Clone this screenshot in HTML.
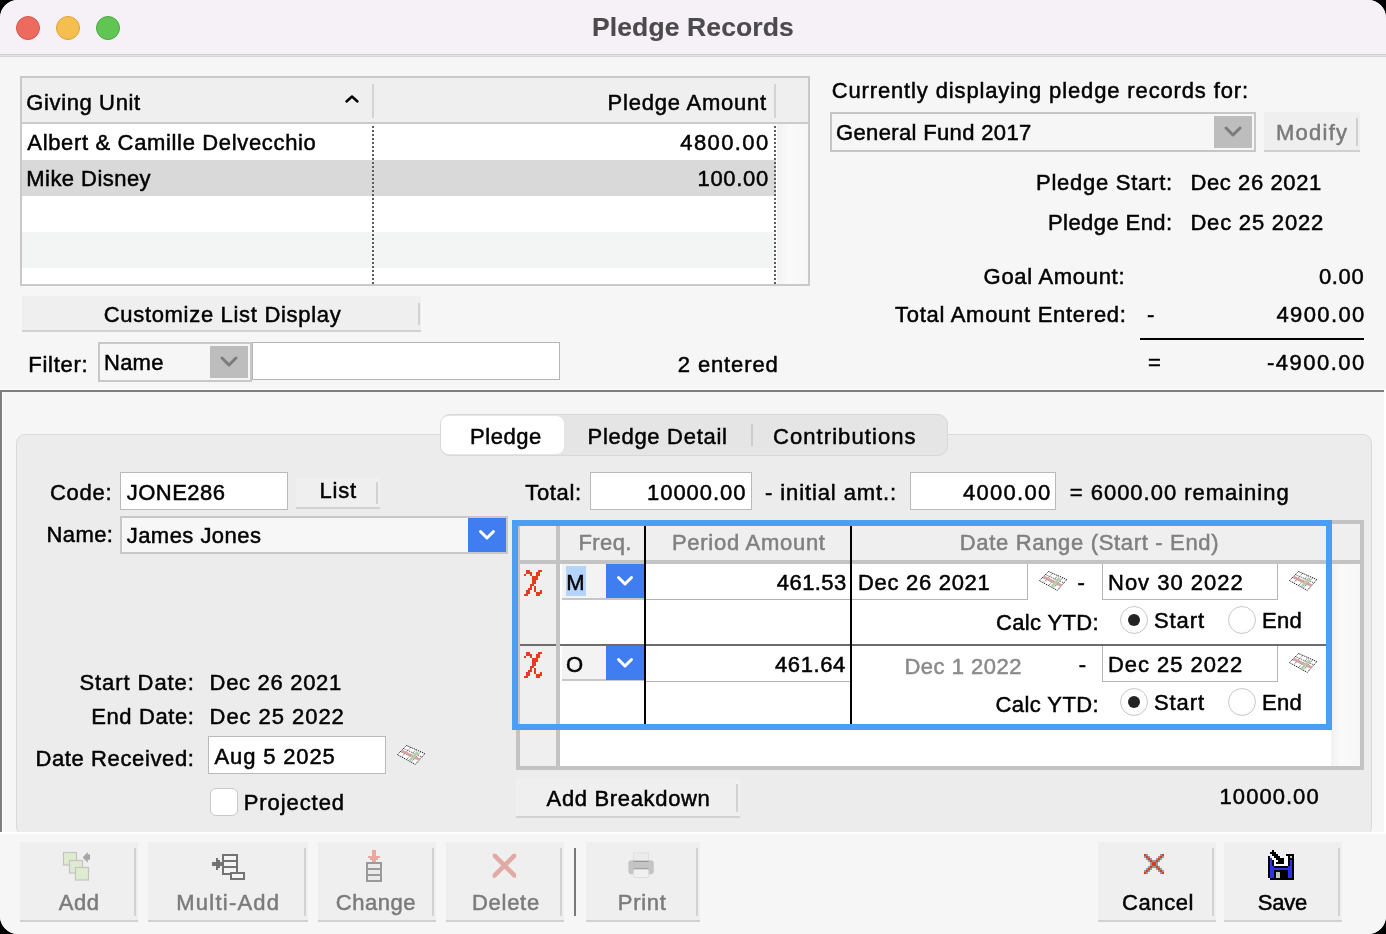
<!DOCTYPE html>
<html><head><meta charset="utf-8"><title>Pledge Records</title>
<style>
html,body{margin:0;padding:0;width:1386px;height:934px;overflow:hidden;background:#000}
#w{position:absolute;left:0;top:0;width:1386px;height:934px;background:#f6f6f6;border-radius:18px;overflow:hidden;font-family:"Liberation Sans",sans-serif}
.t{position:absolute;white-space:pre;font-family:"Liberation Sans",sans-serif;color:#000;-webkit-text-stroke:0.5px currentColor}
.b{position:absolute;box-sizing:border-box}
svg{position:absolute;overflow:visible}
</style></head><body><div id="w">
<!-- title bar -->
<div class=b style="left:0;top:0;width:1386px;height:54px;background:#f6f1f6"></div>
<div class=b style="left:0;top:54px;width:1386px;height:1px;background:#d2cdd2"></div>
<div class=b style="left:0;top:55px;width:1386px;height:1px;background:#e6e2e6"></div>
<div class=b style="left:0;top:56px;width:1386px;height:1px;background:#d4d4d4"></div>
<div class=b style="left:16px;top:16px;width:24px;height:24px;border-radius:50%;background:#ec6a5e;border:1px solid #d5564b"></div>
<div class=b style="left:56px;top:16px;width:24px;height:24px;border-radius:50%;background:#f4bf4f;border:1px solid #d9a33a"></div>
<div class=b style="left:96px;top:16px;width:24px;height:24px;border-radius:50%;background:#61c554;border:1px solid #4ea83f"></div>

<!-- table -->
<div class=b style="left:20px;top:76px;width:790px;height:210px;border:2px solid #c9c9c9;background:#fff"></div>
<div class=b style="left:22px;top:78px;width:786px;height:44px;background:#efefef"></div>
<div class=b style="left:22px;top:122px;width:786px;height:2px;background:#cbcbcb"></div>
<div class=b style="left:22px;top:160px;width:754px;height:36px;background:#d9d9d9"></div>
<div class=b style="left:22px;top:232px;width:754px;height:36px;background:#f3f4f4"></div>
<div class=b style="left:372px;top:84px;width:2px;height:34px;background:#d4d4d4"></div>
<div class=b style="left:774px;top:84px;width:2px;height:34px;background:#d4d4d4"></div>
<div class=b style="left:372px;top:126px;width:2px;height:158px;background:repeating-linear-gradient(180deg,#5c5c5c 0 2px,transparent 2px 4px)"></div>
<div class=b style="left:774px;top:126px;width:2px;height:158px;background:repeating-linear-gradient(180deg,#5c5c5c 0 2px,transparent 2px 4px)"></div>
<div class=b style="left:777px;top:124px;width:31px;height:160px;background:linear-gradient(90deg,#f2f2f2,#fafafa 40%,#f7f7f7)"></div>
<svg style="left:340px;top:90px" width="26" height="20"><path d="M6.5 11.5 L12 6.5 L17.5 11.5" fill="none" stroke="#000" stroke-width="2.4" stroke-linecap="round" stroke-linejoin="round"/></svg>

<!-- right info -->
<div class=b style="left:830px;top:112px;width:426px;height:40px;border:2px solid #c6c6c6;background:#f6f6f6"></div>
<div class=b style="left:1214px;top:116px;width:38px;height:32px;background:#bdbdbd"></div>
<svg style="left:1214px;top:116px" width="38" height="32"><path d="M12 12 L19 19 L26 12" fill="none" stroke="#7b7b7b" stroke-width="3" stroke-linecap="round" stroke-linejoin="round"/></svg>
<div class=b style="left:1264px;top:112px;width:96px;height:40px;background:#efefef;border-bottom:2px solid #d0d0d0"></div>
<div class=b style="left:1356px;top:118px;width:2px;height:28px;background:#d0d0d0"></div>
<div class=b style="left:1140px;top:338px;width:224px;height:2px;background:#000"></div>

<!-- customize / filter -->
<div class=b style="left:22px;top:296px;width:399px;height:36px;background:#efefef;border-bottom:2px solid #d2d2d2"></div>
<div class=b style="left:418px;top:303px;width:2px;height:22px;background:#d2d2d2"></div>
<div class=b style="left:98px;top:342px;width:154px;height:40px;border:2px solid #c8c8c8;background:#f6f6f6"></div>
<div class=b style="left:210px;top:346px;width:38px;height:32px;background:#bdbdbd"></div>
<svg style="left:210px;top:346px" width="38" height="32"><path d="M12 12 L19 19 L26 12" fill="none" stroke="#7b7b7b" stroke-width="3" stroke-linecap="round" stroke-linejoin="round"/></svg>
<div class=b style="left:252px;top:342px;width:308px;height:38px;border:1px solid #b5b5b5;background:#fff"></div>

<!-- separator -->
<div class=b style="left:0;top:389px;width:1384px;height:1px;background:#fff"></div>
<div class=b style="left:0;top:390px;width:1384px;height:2px;background:#7f7f7f"></div>
<div class=b style="left:0;top:390px;width:2px;height:442px;background:#7f7f7f"></div>
<div class=b style="left:2px;top:392px;width:1px;height:440px;background:#fff"></div>
<div class=b style="left:1384px;top:389px;width:2px;height:443px;background:#fff"></div>

<!-- tab panel -->
<div class=b style="left:16px;top:434px;width:1356px;height:402px;border:1px solid #d9d9d9;border-radius:9px;background:#ececec"></div>
<div class=b style="left:440px;top:414px;width:508px;height:42px;border:1px solid #d8d8d8;border-radius:10px;background:#e5e5e5"></div>
<div class=b style="left:441px;top:416px;width:123px;height:38px;border-radius:8px;background:#fff"></div>
<div class=b style="left:751px;top:424px;width:2px;height:22px;background:#cbcbcb"></div>

<!-- white line above toolbar + toolbar bg -->
<div class=b style="left:0;top:832px;width:1386px;height:2px;background:#fff"></div>
<div class=b style="left:0;top:834px;width:1386px;height:100px;background:#f6f6f6"></div>

<!-- left form -->
<div class=b style="left:120px;top:472px;width:168px;height:38px;border:1px solid #b9b9b9;background:#fff"></div>
<div class=b style="left:296px;top:478px;width:84px;height:31px;background:#efefef;border-bottom:2px solid #d2d2d2"></div>
<div class=b style="left:376px;top:482px;width:2px;height:22px;background:#d2d2d2"></div>
<div class=b style="left:120px;top:516px;width:388px;height:38px;border:2px solid #c8c8c8;background:#f7f7f7"></div>
<div class=b style="left:468px;top:518px;width:38px;height:34px;background:#3f7df0"></div>
<svg style="left:468px;top:518px" width="38" height="34"><path d="M12.5 13.5 L19 20 L25.5 13.5" fill="none" stroke="#fff" stroke-width="3" stroke-linecap="round" stroke-linejoin="round"/></svg>
<div class=b style="left:208px;top:736px;width:178px;height:38px;border:1px solid #b9b9b9;background:#fff"></div>
<div class=b style="left:210px;top:788px;width:28px;height:28px;border:1px solid #c9c9c9;border-radius:6px;background:#fff"></div>

<!-- totals fields -->
<div class=b style="left:590px;top:472px;width:162px;height:38px;border:1px solid #b9b9b9;background:#fff"></div>
<div class=b style="left:910px;top:472px;width:146px;height:38px;border:1px solid #b9b9b9;background:#fff"></div>

<!-- grid -->
<div class=b style="left:516px;top:520px;width:848px;height:250px;border:4px solid #c3c3c3;background:#fff"></div>
<div class=b style="left:520px;top:524px;width:840px;height:36px;background:#efefef"></div>
<div class=b style="left:520px;top:560px;width:840px;height:4px;background:#c3c3c3"></div>
<div class=b style="left:520px;top:564px;width:36px;height:202px;background:#efefef"></div>
<div class=b style="left:556px;top:524px;width:4px;height:242px;background:#c3c3c3"></div>
<div class=b style="left:1331px;top:564px;width:29px;height:202px;background:linear-gradient(90deg,#f1f1f1,#fafafa 35%,#f7f7f7)"></div>
<!-- row separator -->
<div class=b style="left:520px;top:644px;width:36px;height:2px;background:#6c6c6c"></div>
<div class=b style="left:560px;top:644px;width:768px;height:2px;background:#6c6c6c"></div>
<!-- black dividers -->
<div class=b style="left:644px;top:525px;width:2px;height:199px;background:#000"></div>
<div class=b style="left:850px;top:525px;width:2px;height:199px;background:#000"></div>
<!-- row 1 -->
<div class=b style="left:562px;top:564px;width:82px;height:36px;background:#f3f3f3;border-bottom:2px solid #c6c6c6"></div>
<div class=b style="left:606px;top:564px;width:38px;height:34px;background:#3f7df0"></div>
<svg style="left:606px;top:564px" width="38" height="34"><path d="M12.5 13.5 L19 20 L25.5 13.5" fill="none" stroke="#fff" stroke-width="3" stroke-linecap="round" stroke-linejoin="round"/></svg>
<div class=b style="left:566px;top:566px;width:20px;height:30px;background:#b5d4fb"></div>
<div class=b style="left:646px;top:564px;width:204px;height:36px;border-bottom:1px solid #b0b0b0;background:#fff"></div>
<div class=b style="left:852px;top:564px;width:176px;height:36px;border-right:1px solid #b5b5b5;border-bottom:1px solid #b5b5b5;background:#fff"></div>
<div class=b style="left:1102px;top:564px;width:176px;height:36px;border:1px solid #b5b5b5;border-top:none;background:#fff"></div>
<!-- row 2 -->
<div class=b style="left:562px;top:646px;width:82px;height:35px;background:#f3f3f3;border-bottom:2px solid #c6c6c6"></div>
<div class=b style="left:606px;top:646px;width:38px;height:34px;background:#3f7df0"></div>
<svg style="left:606px;top:647px" width="38" height="34"><path d="M12.5 12.5 L19 19 L25.5 12.5" fill="none" stroke="#fff" stroke-width="3" stroke-linecap="round" stroke-linejoin="round"/></svg>
<div class=b style="left:646px;top:646px;width:204px;height:36px;border-bottom:1px solid #b0b0b0;background:#fff"></div>
<div class=b style="left:1102px;top:646px;width:176px;height:36px;border:1px solid #b5b5b5;border-top:none;background:#fff"></div>
<!-- focus ring -->
<div class=b style="left:512px;top:520px;width:820px;height:210px;border:6px solid #4a9ff5"></div>

<!-- add breakdown -->
<div class=b style="left:516px;top:778px;width:224px;height:40px;background:#efefef;border-bottom:2px solid #d2d2d2"></div>
<div class=b style="left:736px;top:784px;width:2px;height:28px;background:#d2d2d2"></div>

<!-- toolbar buttons -->
<div class=b style="left:20px;top:842px;width:118px;height:80px;background:#efefef;border-bottom:2px solid #d2d2d2"></div>
<div class=b style="left:134px;top:848px;width:2px;height:68px;background:#d2d2d2"></div>
<div class=b style="left:148px;top:842px;width:160px;height:80px;background:#efefef;border-bottom:2px solid #d2d2d2"></div>
<div class=b style="left:304px;top:848px;width:2px;height:68px;background:#d2d2d2"></div>
<div class=b style="left:318px;top:842px;width:118px;height:80px;background:#efefef;border-bottom:2px solid #d2d2d2"></div>
<div class=b style="left:432px;top:848px;width:2px;height:68px;background:#d2d2d2"></div>
<div class=b style="left:446px;top:842px;width:118px;height:80px;background:#efefef;border-bottom:2px solid #d2d2d2"></div>
<div class=b style="left:560px;top:848px;width:2px;height:68px;background:#d2d2d2"></div>
<div class=b style="left:574px;top:848px;width:2px;height:68px;background:#7a7a7a"></div>
<div class=b style="left:586px;top:842px;width:114px;height:80px;background:#efefef;border-bottom:2px solid #d2d2d2"></div>
<div class=b style="left:696px;top:848px;width:2px;height:68px;background:#d2d2d2"></div>
<div class=b style="left:1098px;top:842px;width:118px;height:80px;background:#efefef;border-bottom:2px solid #d2d2d2"></div>
<div class=b style="left:1212px;top:848px;width:2px;height:68px;background:#d2d2d2"></div>
<div class=b style="left:1224px;top:842px;width:118px;height:80px;background:#efefef;border-bottom:2px solid #d2d2d2"></div>
<div class=b style="left:1338px;top:848px;width:2px;height:68px;background:#d2d2d2"></div>



<!-- chi icons -->
<svg style="left:524px;top:570px" width="18" height="26" shape-rendering="crispEdges" fill="#e63b1f"><rect x="2" y="0" width="2" height="2"/><rect x="4" y="0" width="2" height="2"/><rect x="14" y="0" width="2" height="2"/><rect x="16" y="0" width="2" height="2"/><rect x="2" y="2" width="2" height="2"/><rect x="4" y="2" width="2" height="2"/><rect x="6" y="2" width="2" height="2"/><rect x="12" y="2" width="2" height="2"/><rect x="14" y="2" width="2" height="2"/><rect x="0" y="4" width="2" height="2"/><rect x="6" y="4" width="2" height="2"/><rect x="12" y="4" width="2" height="2"/><rect x="14" y="4" width="2" height="2"/><rect x="8" y="6" width="2" height="2"/><rect x="10" y="6" width="2" height="2"/><rect x="12" y="6" width="2" height="2"/><rect x="8" y="8" width="2" height="2"/><rect x="10" y="8" width="2" height="2"/><rect x="12" y="8" width="2" height="2"/><rect x="8" y="10" width="2" height="2"/><rect x="10" y="10" width="2" height="2"/><rect x="8" y="12" width="2" height="2"/><rect x="10" y="12" width="2" height="2"/><rect x="6" y="14" width="2" height="2"/><rect x="8" y="14" width="2" height="2"/><rect x="6" y="16" width="2" height="2"/><rect x="10" y="16" width="2" height="2"/><rect x="4" y="18" width="2" height="2"/><rect x="6" y="18" width="2" height="2"/><rect x="10" y="18" width="2" height="2"/><rect x="2" y="20" width="2" height="2"/><rect x="4" y="20" width="2" height="2"/><rect x="10" y="20" width="2" height="2"/><rect x="16" y="20" width="2" height="2"/><rect x="2" y="22" width="2" height="2"/><rect x="4" y="22" width="2" height="2"/><rect x="12" y="22" width="2" height="2"/><rect x="14" y="22" width="2" height="2"/><rect x="16" y="22" width="2" height="2"/><rect x="0" y="24" width="2" height="2"/><rect x="2" y="24" width="2" height="2"/><rect x="12" y="24" width="2" height="2"/><rect x="14" y="24" width="2" height="2"/></svg>
<svg style="left:524px;top:652px" width="18" height="26" shape-rendering="crispEdges" fill="#e63b1f"><rect x="2" y="0" width="2" height="2"/><rect x="4" y="0" width="2" height="2"/><rect x="14" y="0" width="2" height="2"/><rect x="16" y="0" width="2" height="2"/><rect x="2" y="2" width="2" height="2"/><rect x="4" y="2" width="2" height="2"/><rect x="6" y="2" width="2" height="2"/><rect x="12" y="2" width="2" height="2"/><rect x="14" y="2" width="2" height="2"/><rect x="0" y="4" width="2" height="2"/><rect x="6" y="4" width="2" height="2"/><rect x="12" y="4" width="2" height="2"/><rect x="14" y="4" width="2" height="2"/><rect x="8" y="6" width="2" height="2"/><rect x="10" y="6" width="2" height="2"/><rect x="12" y="6" width="2" height="2"/><rect x="8" y="8" width="2" height="2"/><rect x="10" y="8" width="2" height="2"/><rect x="12" y="8" width="2" height="2"/><rect x="8" y="10" width="2" height="2"/><rect x="10" y="10" width="2" height="2"/><rect x="8" y="12" width="2" height="2"/><rect x="10" y="12" width="2" height="2"/><rect x="6" y="14" width="2" height="2"/><rect x="8" y="14" width="2" height="2"/><rect x="6" y="16" width="2" height="2"/><rect x="10" y="16" width="2" height="2"/><rect x="4" y="18" width="2" height="2"/><rect x="6" y="18" width="2" height="2"/><rect x="10" y="18" width="2" height="2"/><rect x="2" y="20" width="2" height="2"/><rect x="4" y="20" width="2" height="2"/><rect x="10" y="20" width="2" height="2"/><rect x="16" y="20" width="2" height="2"/><rect x="2" y="22" width="2" height="2"/><rect x="4" y="22" width="2" height="2"/><rect x="12" y="22" width="2" height="2"/><rect x="14" y="22" width="2" height="2"/><rect x="16" y="22" width="2" height="2"/><rect x="0" y="24" width="2" height="2"/><rect x="2" y="24" width="2" height="2"/><rect x="12" y="24" width="2" height="2"/><rect x="14" y="24" width="2" height="2"/></svg>
<!-- calendars -->
<svg style="left:1039px;top:571px" width="28" height="20">
<polygon points="9.5,0.5 27.8,8.6 18.3,19.4 0.4,9.6" fill="#fff" stroke="#1a1a1a" stroke-width="1" stroke-dasharray="1.2 0.9"/>
<path d="M6.6,3.6 L24.6,11.8 M3.4,6.6 L21.6,15.2 M14.1,2.0 L5.0,11.4 M19.2,4.4 L10.0,14.0 M23.8,6.6 L14.2,17.3" stroke="#444" stroke-width="0.8" fill="none" stroke-dasharray="1.2 0.8"/>
<path d="M4.3,5.8 L23,14.6" stroke="#d9a3a3" stroke-width="2.6" fill="none"/>
<path d="M20.7,7.0 L12.4,15.8" stroke="#b3cfaa" stroke-width="2.6" fill="none"/>
</svg>
<svg style="left:1289px;top:571px" width="28" height="20">
<polygon points="9.5,0.5 27.8,8.6 18.3,19.4 0.4,9.6" fill="#fff" stroke="#1a1a1a" stroke-width="1" stroke-dasharray="1.2 0.9"/>
<path d="M6.6,3.6 L24.6,11.8 M3.4,6.6 L21.6,15.2 M14.1,2.0 L5.0,11.4 M19.2,4.4 L10.0,14.0 M23.8,6.6 L14.2,17.3" stroke="#444" stroke-width="0.8" fill="none" stroke-dasharray="1.2 0.8"/>
<path d="M4.3,5.8 L23,14.6" stroke="#d9a3a3" stroke-width="2.6" fill="none"/>
<path d="M20.7,7.0 L12.4,15.8" stroke="#b3cfaa" stroke-width="2.6" fill="none"/>
</svg>
<svg style="left:1289px;top:653px" width="28" height="20">
<polygon points="9.5,0.5 27.8,8.6 18.3,19.4 0.4,9.6" fill="#fff" stroke="#1a1a1a" stroke-width="1" stroke-dasharray="1.2 0.9"/>
<path d="M6.6,3.6 L24.6,11.8 M3.4,6.6 L21.6,15.2 M14.1,2.0 L5.0,11.4 M19.2,4.4 L10.0,14.0 M23.8,6.6 L14.2,17.3" stroke="#444" stroke-width="0.8" fill="none" stroke-dasharray="1.2 0.8"/>
<path d="M4.3,5.8 L23,14.6" stroke="#d9a3a3" stroke-width="2.6" fill="none"/>
<path d="M20.7,7.0 L12.4,15.8" stroke="#b3cfaa" stroke-width="2.6" fill="none"/>
</svg>
<svg style="left:397px;top:745px" width="28" height="20">
<polygon points="9.5,0.5 27.8,8.6 18.3,19.4 0.4,9.6" fill="#fff" stroke="#1a1a1a" stroke-width="1" stroke-dasharray="1.2 0.9"/>
<path d="M6.6,3.6 L24.6,11.8 M3.4,6.6 L21.6,15.2 M14.1,2.0 L5.0,11.4 M19.2,4.4 L10.0,14.0 M23.8,6.6 L14.2,17.3" stroke="#444" stroke-width="0.8" fill="none" stroke-dasharray="1.2 0.8"/>
<path d="M4.3,5.8 L23,14.6" stroke="#d9a3a3" stroke-width="2.6" fill="none"/>
<path d="M20.7,7.0 L12.4,15.8" stroke="#b3cfaa" stroke-width="2.6" fill="none"/>
</svg>
<!-- radios -->
<div class=b style="left:1120px;top:606px;width:28px;height:28px;border-radius:50%;border:1px solid #c9c9c9;background:radial-gradient(circle at 50% 40%,#fff 55%,#f4f4f4)"></div>
<div class=b style="left:1128px;top:614px;width:12px;height:12px;border-radius:50%;background:#232323"></div>
<div class=b style="left:1228px;top:606px;width:28px;height:28px;border-radius:50%;border:1px solid #c9c9c9;background:radial-gradient(circle at 50% 40%,#fff 55%,#f4f4f4)"></div>
<div class=b style="left:1120px;top:688px;width:28px;height:28px;border-radius:50%;border:1px solid #c9c9c9;background:radial-gradient(circle at 50% 40%,#fff 55%,#f4f4f4)"></div>
<div class=b style="left:1128px;top:696px;width:12px;height:12px;border-radius:50%;background:#232323"></div>
<div class=b style="left:1228px;top:688px;width:28px;height:28px;border-radius:50%;border:1px solid #c9c9c9;background:radial-gradient(circle at 50% 40%,#fff 55%,#f4f4f4)"></div>
<!-- add icon -->
<svg style="left:60px;top:850px" width="34" height="34">
<rect x="3.5" y="2.5" width="13" height="12.5" fill="#dfebcf" stroke="#c3c3c3" stroke-width="1.2"/>
<rect x="9.5" y="10.5" width="13" height="12.5" fill="#dfebcf" stroke="#c3c3c3" stroke-width="1.2"/>
<rect x="15.5" y="17.5" width="13" height="12.5" fill="#dfebcf" stroke="#c3c3c3" stroke-width="1.2"/>
<path d="M22.7,7.4 L27.7,2 L27.7,4.2 L30,4.2 L30,9.8 L27.7,9.8 L27.7,12.8 Z" fill="#a6a6a6"/>
</svg>
<!-- multi-add icon -->
<svg style="left:210px;top:850px" width="40" height="34" shape-rendering="crispEdges">
<rect x="13" y="5" width="14" height="18.5" fill="#f4f4f4" stroke="#737373" stroke-width="2"/>
<path d="M13,10.5 H27 M13,16.5 H27" stroke="#737373" stroke-width="2"/>
<rect x="21" y="23" width="13" height="6" fill="#f4f4f4" stroke="#737373" stroke-width="2"/>
<rect x="2" y="12" width="10" height="3.7" fill="#737373"/>
<rect x="6" y="8" width="2" height="12" fill="#737373"/>
<rect x="8" y="10" width="2" height="8" fill="#737373"/>
</svg>
<!-- change icon -->
<svg style="left:364px;top:848px" width="20" height="36" shape-rendering="crispEdges">
<rect x="8" y="2" width="4" height="12" fill="#eaa6a0"/>
<rect x="4" y="8" width="12" height="2" fill="#eaa6a0"/>
<rect x="6" y="10" width="8" height="2" fill="#eaa6a0"/>
<rect x="3" y="15" width="14" height="18" fill="#ebebeb" stroke="#9a9a9a" stroke-width="2"/>
<path d="M3,21 H17 M3,27 H17" stroke="#9a9a9a" stroke-width="2"/>
</svg>
<!-- delete icon -->
<svg style="left:492px;top:853px" width="25" height="25">
<clipPath id="dc"><rect x="0.7" y="0.8" width="23.4" height="24"/></clipPath>
<g clip-path="url(#dc)" stroke="#e2aaa4" stroke-width="4.6"><path d="M-1,-1 L26,26 M26,-1 L-1,26"/></g>
</svg>
<!-- print icon -->
<svg style="left:626px;top:850px" width="30" height="30">
<rect x="7.6" y="3" width="15" height="9" fill="#ececec" stroke="#dcdcdc" stroke-width="0.8"/>
<rect x="2.4" y="10.3" width="25.4" height="14" rx="3" fill="#c4c4c4"/>
<rect x="7.6" y="11" width="15" height="1" fill="#9a9a9a"/>
<rect x="7.6" y="18" width="15" height="1.6" fill="#a2a2a2"/>
<rect x="7.6" y="19.5" width="15" height="8" rx="1" fill="#f0f0f0" stroke="#dadada" stroke-width="0.8"/>
</svg>
<!-- cancel icon -->
<svg style="left:1144px;top:854px" width="20" height="20" shape-rendering="crispEdges"><rect x="8" y="10" width="2" height="2" fill="#e8361a"/><rect x="4" y="4" width="2" height="2" fill="#e8361a"/><rect x="14" y="14" width="2" height="2" fill="#e8361a"/><rect x="10" y="8" width="2" height="2" fill="#e8361a"/><rect x="6" y="6" width="2" height="2" fill="#e8361a"/><rect x="12" y="6" width="2" height="2" fill="#e8361a"/><rect x="16" y="16" width="2" height="2" fill="#e8361a"/><rect x="14" y="4" width="2" height="2" fill="#e8361a"/><rect x="16" y="2" width="2" height="2" fill="#e8361a"/><rect x="8" y="8" width="2" height="2" fill="#e8361a"/><rect x="0" y="18" width="2" height="2" fill="#e8361a"/><rect x="10" y="10" width="2" height="2" fill="#e8361a"/><rect x="0" y="0" width="2" height="2" fill="#e8361a"/><rect x="2" y="16" width="2" height="2" fill="#e8361a"/><rect x="18" y="18" width="2" height="2" fill="#e8361a"/><rect x="2" y="2" width="2" height="2" fill="#e8361a"/><rect x="18" y="0" width="2" height="2" fill="#e8361a"/><rect x="4" y="14" width="2" height="2" fill="#e8361a"/><rect x="12" y="12" width="2" height="2" fill="#e8361a"/><rect x="6" y="12" width="2" height="2" fill="#e8361a"/><rect x="8" y="6" width="2" height="2" fill="#8c9c9e"/><rect x="6" y="8" width="2" height="2" fill="#8c9c9e"/><rect x="14" y="6" width="2" height="2" fill="#8c9c9e"/><rect x="12" y="8" width="2" height="2" fill="#8c9c9e"/><rect x="0" y="16" width="2" height="2" fill="#8c9c9e"/><rect x="18" y="16" width="2" height="2" fill="#8c9c9e"/><rect x="16" y="18" width="2" height="2" fill="#8c9c9e"/><rect x="0" y="2" width="2" height="2" fill="#8c9c9e"/><rect x="16" y="0" width="2" height="2" fill="#8c9c9e"/><rect x="18" y="2" width="2" height="2" fill="#8c9c9e"/><rect x="16" y="4" width="2" height="2" fill="#8c9c9e"/><rect x="4" y="12" width="2" height="2" fill="#8c9c9e"/><rect x="2" y="14" width="2" height="2" fill="#8c9c9e"/><rect x="10" y="12" width="2" height="2" fill="#8c9c9e"/><rect x="12" y="10" width="2" height="2" fill="#8c9c9e"/><rect x="6" y="10" width="2" height="2" fill="#8c9c9e"/><rect x="4" y="16" width="2" height="2" fill="#8c9c9e"/><rect x="2" y="18" width="2" height="2" fill="#8c9c9e"/><rect x="2" y="0" width="2" height="2" fill="#8c9c9e"/><rect x="4" y="2" width="2" height="2" fill="#8c9c9e"/><rect x="2" y="4" width="2" height="2" fill="#8c9c9e"/><rect x="8" y="12" width="2" height="2" fill="#8c9c9e"/><rect x="6" y="14" width="2" height="2" fill="#8c9c9e"/><rect x="14" y="12" width="2" height="2" fill="#8c9c9e"/><rect x="12" y="14" width="2" height="2" fill="#8c9c9e"/><rect x="4" y="6" width="2" height="2" fill="#8c9c9e"/><rect x="10" y="6" width="2" height="2" fill="#8c9c9e"/><rect x="14" y="16" width="2" height="2" fill="#8c9c9e"/><rect x="6" y="4" width="2" height="2" fill="#8c9c9e"/><rect x="14" y="2" width="2" height="2" fill="#8c9c9e"/><rect x="12" y="4" width="2" height="2" fill="#8c9c9e"/><rect x="16" y="14" width="2" height="2" fill="#8c9c9e"/></svg>
<!-- save icon -->
<svg style="left:1268px;top:850px" width="26" height="30" shape-rendering="crispEdges"><rect x="4" y="0" width="2" height="2" fill="#000"/><rect x="2" y="2" width="2" height="2" fill="#000"/><rect x="4" y="2" width="2" height="2" fill="#000"/><rect x="6" y="2" width="2" height="2" fill="#000"/><rect x="4" y="4" width="2" height="2" fill="#000"/><rect x="6" y="4" width="2" height="2" fill="#000"/><rect x="8" y="4" width="2" height="2" fill="#000"/><rect x="18" y="4" width="2" height="2" fill="#000"/><rect x="20" y="4" width="2" height="2" fill="#000"/><rect x="22" y="4" width="2" height="2" fill="#000"/><rect x="24" y="4" width="2" height="2" fill="#000"/><rect x="0" y="6" width="2" height="2" fill="#000"/><rect x="4" y="6" width="2" height="2" fill="#fff"/><rect x="6" y="6" width="2" height="2" fill="#000"/><rect x="8" y="6" width="2" height="2" fill="#000"/><rect x="10" y="6" width="2" height="2" fill="#000"/><rect x="12" y="6" width="2" height="2" fill="#fff"/><rect x="16" y="6" width="2" height="2" fill="#fff"/><rect x="18" y="6" width="2" height="2" fill="#fff"/><rect x="20" y="6" width="2" height="2" fill="#000"/><rect x="22" y="6" width="2" height="2" fill="#c4c4c4"/><rect x="24" y="6" width="2" height="2" fill="#000"/><rect x="0" y="8" width="2" height="2" fill="#000"/><rect x="2" y="8" width="2" height="2" fill="#2b33e6"/><rect x="4" y="8" width="2" height="2" fill="#fff"/><rect x="6" y="8" width="2" height="2" fill="#fff"/><rect x="8" y="8" width="2" height="2" fill="#000"/><rect x="10" y="8" width="2" height="2" fill="#000"/><rect x="12" y="8" width="2" height="2" fill="#000"/><rect x="14" y="8" width="2" height="2" fill="#000"/><rect x="16" y="8" width="2" height="2" fill="#fff"/><rect x="18" y="8" width="2" height="2" fill="#fff"/><rect x="20" y="8" width="2" height="2" fill="#000"/><rect x="22" y="8" width="2" height="2" fill="#000"/><rect x="24" y="8" width="2" height="2" fill="#000"/><rect x="0" y="10" width="2" height="2" fill="#000"/><rect x="2" y="10" width="2" height="2" fill="#2b33e6"/><rect x="4" y="10" width="2" height="2" fill="#000"/><rect x="6" y="10" width="2" height="2" fill="#fff"/><rect x="8" y="10" width="2" height="2" fill="#fff"/><rect x="10" y="10" width="2" height="2" fill="#000"/><rect x="12" y="10" width="2" height="2" fill="#000"/><rect x="14" y="10" width="2" height="2" fill="#000"/><rect x="16" y="10" width="2" height="2" fill="#fff"/><rect x="18" y="10" width="2" height="2" fill="#fff"/><rect x="20" y="10" width="2" height="2" fill="#000"/><rect x="22" y="10" width="2" height="2" fill="#2b33e6"/><rect x="24" y="10" width="2" height="2" fill="#000"/><rect x="0" y="12" width="2" height="2" fill="#000"/><rect x="2" y="12" width="2" height="2" fill="#2b33e6"/><rect x="4" y="12" width="2" height="2" fill="#000"/><rect x="6" y="12" width="2" height="2" fill="#fff"/><rect x="8" y="12" width="2" height="2" fill="#000"/><rect x="10" y="12" width="2" height="2" fill="#000"/><rect x="12" y="12" width="2" height="2" fill="#000"/><rect x="14" y="12" width="2" height="2" fill="#000"/><rect x="16" y="12" width="2" height="2" fill="#fff"/><rect x="18" y="12" width="2" height="2" fill="#fff"/><rect x="20" y="12" width="2" height="2" fill="#000"/><rect x="22" y="12" width="2" height="2" fill="#2b33e6"/><rect x="24" y="12" width="2" height="2" fill="#000"/><rect x="0" y="14" width="2" height="2" fill="#000"/><rect x="2" y="14" width="2" height="2" fill="#2b33e6"/><rect x="4" y="14" width="2" height="2" fill="#000"/><rect x="6" y="14" width="2" height="2" fill="#fff"/><rect x="8" y="14" width="2" height="2" fill="#fff"/><rect x="10" y="14" width="2" height="2" fill="#fff"/><rect x="12" y="14" width="2" height="2" fill="#fff"/><rect x="14" y="14" width="2" height="2" fill="#fff"/><rect x="16" y="14" width="2" height="2" fill="#fff"/><rect x="18" y="14" width="2" height="2" fill="#fff"/><rect x="20" y="14" width="2" height="2" fill="#000"/><rect x="22" y="14" width="2" height="2" fill="#2b33e6"/><rect x="24" y="14" width="2" height="2" fill="#000"/><rect x="0" y="16" width="2" height="2" fill="#000"/><rect x="2" y="16" width="2" height="2" fill="#2b33e6"/><rect x="4" y="16" width="2" height="2" fill="#2b33e6"/><rect x="6" y="16" width="2" height="2" fill="#000"/><rect x="8" y="16" width="2" height="2" fill="#000"/><rect x="10" y="16" width="2" height="2" fill="#000"/><rect x="12" y="16" width="2" height="2" fill="#000"/><rect x="14" y="16" width="2" height="2" fill="#000"/><rect x="16" y="16" width="2" height="2" fill="#000"/><rect x="18" y="16" width="2" height="2" fill="#000"/><rect x="20" y="16" width="2" height="2" fill="#2b33e6"/><rect x="22" y="16" width="2" height="2" fill="#2b33e6"/><rect x="24" y="16" width="2" height="2" fill="#000"/><rect x="0" y="18" width="2" height="2" fill="#000"/><rect x="2" y="18" width="2" height="2" fill="#2b33e6"/><rect x="4" y="18" width="2" height="2" fill="#2b33e6"/><rect x="6" y="18" width="2" height="2" fill="#2b33e6"/><rect x="8" y="18" width="2" height="2" fill="#2b33e6"/><rect x="10" y="18" width="2" height="2" fill="#2b33e6"/><rect x="12" y="18" width="2" height="2" fill="#2b33e6"/><rect x="14" y="18" width="2" height="2" fill="#2b33e6"/><rect x="16" y="18" width="2" height="2" fill="#2b33e6"/><rect x="18" y="18" width="2" height="2" fill="#2b33e6"/><rect x="20" y="18" width="2" height="2" fill="#2b33e6"/><rect x="22" y="18" width="2" height="2" fill="#2b33e6"/><rect x="24" y="18" width="2" height="2" fill="#000"/><rect x="0" y="20" width="2" height="2" fill="#000"/><rect x="2" y="20" width="2" height="2" fill="#2b33e6"/><rect x="4" y="20" width="2" height="2" fill="#2b33e6"/><rect x="6" y="20" width="2" height="2" fill="#000"/><rect x="8" y="20" width="2" height="2" fill="#000"/><rect x="10" y="20" width="2" height="2" fill="#000"/><rect x="12" y="20" width="2" height="2" fill="#000"/><rect x="14" y="20" width="2" height="2" fill="#000"/><rect x="16" y="20" width="2" height="2" fill="#000"/><rect x="18" y="20" width="2" height="2" fill="#000"/><rect x="20" y="20" width="2" height="2" fill="#2b33e6"/><rect x="22" y="20" width="2" height="2" fill="#2b33e6"/><rect x="24" y="20" width="2" height="2" fill="#000"/><rect x="0" y="22" width="2" height="2" fill="#000"/><rect x="2" y="22" width="2" height="2" fill="#2b33e6"/><rect x="4" y="22" width="2" height="2" fill="#2b33e6"/><rect x="6" y="22" width="2" height="2" fill="#000"/><rect x="8" y="22" width="2" height="2" fill="#c4c4c4"/><rect x="10" y="22" width="2" height="2" fill="#c4c4c4"/><rect x="12" y="22" width="2" height="2" fill="#000"/><rect x="14" y="22" width="2" height="2" fill="#000"/><rect x="16" y="22" width="2" height="2" fill="#000"/><rect x="18" y="22" width="2" height="2" fill="#000"/><rect x="20" y="22" width="2" height="2" fill="#2b33e6"/><rect x="22" y="22" width="2" height="2" fill="#2b33e6"/><rect x="24" y="22" width="2" height="2" fill="#000"/><rect x="0" y="24" width="2" height="2" fill="#000"/><rect x="2" y="24" width="2" height="2" fill="#2b33e6"/><rect x="4" y="24" width="2" height="2" fill="#2b33e6"/><rect x="6" y="24" width="2" height="2" fill="#000"/><rect x="8" y="24" width="2" height="2" fill="#c4c4c4"/><rect x="10" y="24" width="2" height="2" fill="#c4c4c4"/><rect x="12" y="24" width="2" height="2" fill="#000"/><rect x="14" y="24" width="2" height="2" fill="#000"/><rect x="16" y="24" width="2" height="2" fill="#000"/><rect x="18" y="24" width="2" height="2" fill="#000"/><rect x="20" y="24" width="2" height="2" fill="#2b33e6"/><rect x="22" y="24" width="2" height="2" fill="#2b33e6"/><rect x="24" y="24" width="2" height="2" fill="#000"/><rect x="0" y="26" width="2" height="2" fill="#000"/><rect x="2" y="26" width="2" height="2" fill="#2b33e6"/><rect x="4" y="26" width="2" height="2" fill="#2b33e6"/><rect x="6" y="26" width="2" height="2" fill="#000"/><rect x="8" y="26" width="2" height="2" fill="#c4c4c4"/><rect x="10" y="26" width="2" height="2" fill="#c4c4c4"/><rect x="12" y="26" width="2" height="2" fill="#000"/><rect x="14" y="26" width="2" height="2" fill="#000"/><rect x="16" y="26" width="2" height="2" fill="#000"/><rect x="18" y="26" width="2" height="2" fill="#000"/><rect x="20" y="26" width="2" height="2" fill="#2b33e6"/><rect x="22" y="26" width="2" height="2" fill="#2b33e6"/><rect x="24" y="26" width="2" height="2" fill="#000"/><rect x="2" y="28" width="2" height="2" fill="#000"/><rect x="4" y="28" width="2" height="2" fill="#000"/><rect x="6" y="28" width="2" height="2" fill="#000"/><rect x="8" y="28" width="2" height="2" fill="#000"/><rect x="10" y="28" width="2" height="2" fill="#000"/><rect x="12" y="28" width="2" height="2" fill="#000"/><rect x="14" y="28" width="2" height="2" fill="#000"/><rect x="16" y="28" width="2" height="2" fill="#000"/><rect x="18" y="28" width="2" height="2" fill="#000"/><rect x="20" y="28" width="2" height="2" fill="#000"/><rect x="22" y="28" width="2" height="2" fill="#000"/><rect x="24" y="28" width="2" height="2" fill="#000"/></svg>

<div id="tx" style="position:absolute;left:0;top:0;width:1386px;height:934px;will-change:transform"><div class=t style="left:592.00px;top:14px;font-size:26.5px;line-height:26.5px;letter-spacing:0.111px;color:#4c4a4d;font-weight:bold;-webkit-text-stroke:0.15px currentColor">Pledge Records</div>
<div class=t style="left:26.30px;top:92px;font-size:22px;line-height:22px;letter-spacing:0.622px">Giving Unit</div>
<div class=t style="left:607.50px;top:92px;font-size:22px;line-height:22px;letter-spacing:0.790px">Pledge Amount</div>
<div class=t style="left:27.30px;top:132px;font-size:22px;line-height:22px;letter-spacing:0.658px">Albert &amp; Camille Delvecchio</div>
<div class=t style="left:680.30px;top:132px;font-size:22px;line-height:22px;letter-spacing:1.402px">4800.00</div>
<div class=t style="left:26.30px;top:168px;font-size:22px;line-height:22px;letter-spacing:0.449px">Mike Disney</div>
<div class=t style="left:697.50px;top:168px;font-size:22px;line-height:22px;letter-spacing:0.689px">100.00</div>
<div class=t style="left:831.70px;top:80px;font-size:22px;line-height:22px;letter-spacing:0.863px">Currently displaying pledge records for:</div>
<div class=t style="left:836.00px;top:122px;font-size:22px;line-height:22px;letter-spacing:0.354px">General Fund 2017</div>
<div class=t style="left:1276.00px;top:122px;font-size:22px;line-height:22px;letter-spacing:1.241px;color:#7a7a7a">Modify</div>
<div class=t style="left:1036.00px;top:172px;font-size:22px;line-height:22px;letter-spacing:0.744px">Pledge Start:</div>
<div class=t style="left:1190.40px;top:172px;font-size:22px;line-height:22px;letter-spacing:0.608px">Dec 26 2021</div>
<div class=t style="left:1048.00px;top:212px;font-size:22px;line-height:22px;letter-spacing:0.424px">Pledge End:</div>
<div class=t style="left:1190.40px;top:212px;font-size:22px;line-height:22px;letter-spacing:0.808px">Dec 25 2022</div>
<div class=t style="left:983.60px;top:266px;font-size:22px;line-height:22px;letter-spacing:0.691px">Goal Amount:</div>
<div class=t style="left:1319.00px;top:266px;font-size:22px;line-height:22px;letter-spacing:0.606px">0.00</div>
<div class=t style="left:895.00px;top:304px;font-size:22px;line-height:22px;letter-spacing:0.722px">Total Amount Entered:</div>
<div class=t style="left:1147.00px;top:304px;font-size:22px;line-height:22px;letter-spacing:0.660px">-</div>
<div class=t style="left:1276.50px;top:304px;font-size:22px;line-height:22px;letter-spacing:1.368px">4900.00</div>
<div class=t style="left:1148.00px;top:352px;font-size:22px;line-height:22px;letter-spacing:0.660px">=</div>
<div class=t style="left:1267.00px;top:352px;font-size:22px;line-height:22px;letter-spacing:1.484px">-4900.00</div>
<div class=t style="left:103.70px;top:304px;font-size:22px;line-height:22px;letter-spacing:0.690px">Customize List Display</div>
<div class=t style="left:28.30px;top:354px;font-size:22px;line-height:22px;letter-spacing:0.735px">Filter:</div>
<div class=t style="left:104.00px;top:352px;font-size:22px;line-height:22px;letter-spacing:0.250px">Name</div>
<div class=t style="left:677.80px;top:354px;font-size:22px;line-height:22px;letter-spacing:0.872px">2 entered</div>
<div class=t style="left:470.00px;top:426px;font-size:22px;line-height:22px;letter-spacing:0.546px">Pledge</div>
<div class=t style="left:587.60px;top:426px;font-size:22px;line-height:22px;letter-spacing:0.702px">Pledge Detail</div>
<div class=t style="left:773.00px;top:426px;font-size:22px;line-height:22px;letter-spacing:1.073px">Contributions</div>
<div class=t style="left:49.90px;top:482px;font-size:22px;line-height:22px;letter-spacing:0.727px">Code:</div>
<div class=t style="left:126.70px;top:482px;font-size:22px;line-height:22px;letter-spacing:0.493px">JONE286</div>
<div class=t style="left:319.60px;top:480px;font-size:22px;line-height:22px;letter-spacing:0.759px">List</div>
<div class=t style="left:46.50px;top:524px;font-size:22px;line-height:22px;letter-spacing:0.404px">Name:</div>
<div class=t style="left:126.70px;top:525px;font-size:22px;line-height:22px;letter-spacing:0.468px">James Jones</div>
<div class=t style="left:79.40px;top:672px;font-size:22px;line-height:22px;letter-spacing:0.936px">Start Date:</div>
<div class=t style="left:209.60px;top:672px;font-size:22px;line-height:22px;letter-spacing:0.688px">Dec 26 2021</div>
<div class=t style="left:91.20px;top:706px;font-size:22px;line-height:22px;letter-spacing:0.609px">End Date:</div>
<div class=t style="left:209.60px;top:706px;font-size:22px;line-height:22px;letter-spacing:0.948px">Dec 25 2022</div>
<div class=t style="left:35.40px;top:748px;font-size:22px;line-height:22px;letter-spacing:0.623px">Date Received:</div>
<div class=t style="left:214.60px;top:746px;font-size:22px;line-height:22px;letter-spacing:0.843px">Aug 5 2025</div>
<div class=t style="left:243.70px;top:792px;font-size:22px;line-height:22px;letter-spacing:0.924px">Projected</div>
<div class=t style="left:525.30px;top:482px;font-size:22px;line-height:22px;letter-spacing:0.646px">Total:</div>
<div class=t style="left:647.00px;top:482px;font-size:22px;line-height:22px;letter-spacing:0.968px">10000.00</div>
<div class=t style="left:765.00px;top:482px;font-size:22px;line-height:22px;letter-spacing:0.895px">- initial amt.:</div>
<div class=t style="left:963.00px;top:482px;font-size:22px;line-height:22px;letter-spacing:1.285px">4000.00</div>
<div class=t style="left:1069.80px;top:482px;font-size:22px;line-height:22px;letter-spacing:0.980px">= 6000.00 remaining</div>
<div class=t style="left:578.50px;top:532px;font-size:22px;line-height:22px;letter-spacing:0.391px;color:#808080">Freq.</div>
<div class=t style="left:671.90px;top:532px;font-size:22px;line-height:22px;letter-spacing:0.732px;color:#808080">Period Amount</div>
<div class=t style="left:959.70px;top:532px;font-size:22px;line-height:22px;letter-spacing:0.678px;color:#808080">Date Range (Start - End)</div>
<div class=t style="left:566.30px;top:572px;font-size:22px;line-height:22px;letter-spacing:0.660px">M</div>
<div class=t style="left:776.80px;top:572px;font-size:22px;line-height:22px;letter-spacing:0.429px">461.53</div>
<div class=t style="left:858.00px;top:572px;font-size:22px;line-height:22px;letter-spacing:0.698px">Dec 26 2021</div>
<div class=t style="left:1077.60px;top:572px;font-size:22px;line-height:22px;letter-spacing:0.660px">-</div>
<div class=t style="left:1108.00px;top:572px;font-size:22px;line-height:22px;letter-spacing:0.998px">Nov 30 2022</div>
<div class=t style="left:996.00px;top:612px;font-size:22px;line-height:22px;letter-spacing:0.360px">Calc YTD:</div>
<div class=t style="left:1154.00px;top:610px;font-size:22px;line-height:22px;letter-spacing:0.913px">Start</div>
<div class=t style="left:1262.00px;top:610px;font-size:22px;line-height:22px;letter-spacing:0.345px">End</div>
<div class=t style="left:566.00px;top:654px;font-size:22px;line-height:22px;letter-spacing:0.660px">O</div>
<div class=t style="left:775.00px;top:654px;font-size:22px;line-height:22px;letter-spacing:0.589px">461.64</div>
<div class=t style="left:904.40px;top:656px;font-size:22px;line-height:22px;letter-spacing:0.512px;color:#8a8a8a">Dec 1 2022</div>
<div class=t style="left:1078.70px;top:654px;font-size:22px;line-height:22px;letter-spacing:0.660px">-</div>
<div class=t style="left:1108.00px;top:654px;font-size:22px;line-height:22px;letter-spacing:0.948px">Dec 25 2022</div>
<div class=t style="left:995.50px;top:694px;font-size:22px;line-height:22px;letter-spacing:0.422px">Calc YTD:</div>
<div class=t style="left:1154.00px;top:692px;font-size:22px;line-height:22px;letter-spacing:0.913px">Start</div>
<div class=t style="left:1262.00px;top:692px;font-size:22px;line-height:22px;letter-spacing:0.345px">End</div>
<div class=t style="left:546.60px;top:788px;font-size:22px;line-height:22px;letter-spacing:0.660px">Add Breakdown</div>
<div class=t style="left:1219.60px;top:786px;font-size:22px;line-height:22px;letter-spacing:1.039px">10000.00</div>
<div class=t style="left:58.80px;top:892px;font-size:22px;line-height:22px;letter-spacing:0.495px;color:#7b7b7b">Add</div>
<div class=t style="left:176.30px;top:892px;font-size:22px;line-height:22px;letter-spacing:1.227px;color:#7b7b7b">Multi-Add</div>
<div class=t style="left:335.80px;top:892px;font-size:22px;line-height:22px;letter-spacing:0.534px;color:#7b7b7b">Change</div>
<div class=t style="left:472.00px;top:892px;font-size:22px;line-height:22px;letter-spacing:0.708px;color:#7b7b7b">Delete</div>
<div class=t style="left:617.80px;top:892px;font-size:22px;line-height:22px;letter-spacing:0.719px;color:#7b7b7b">Print</div>
<div class=t style="left:1122.00px;top:892px;font-size:22px;line-height:22px;letter-spacing:0.601px">Cancel</div>
<div class=t style="left:1257.80px;top:892px;font-size:22px;line-height:22px;letter-spacing:-0.236px">Save</div></div>
</div></body></html>
